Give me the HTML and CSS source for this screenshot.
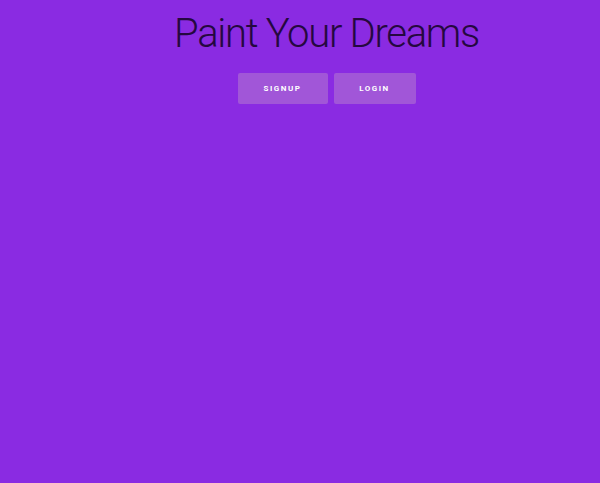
FILE: index.html
```html
<!DOCTYPE html>
<html>
<head>
<meta charset="utf-8">
<link rel="stylesheet" href="styles.css">
</head>
<body>
<div class="hero">
  <h1 class="title">Paint Your Dreams</h1>
  <div class="actions">
    <button class="btn btn-signup">SIGNUP</button>
    <button class="btn btn-login">LOGIN</button>
  </div>
</div>
</body>
</html>
```
FILE: styles.css
```css
html, body {
  margin: 0;
  height: 100%;
}
body {
  background: #8a2be2;
  font-family: Roboto, "Noto Sans", sans-serif;
}
.hero {
  display: flex;
  flex-direction: column;
  align-items: center;
  padding-left: 53px;
  padding-top: 11px;
}
.title {
  margin: 0;
  font-weight: 300;
  font-size: 40px;
  line-height: 46px;
  color: #250840;
  letter-spacing: -1.3px;
}
.actions {
  display: flex;
  gap: 6px;
  margin-top: 16px;
}
.btn {
  border: none;
  border-radius: 2px;
  background: #a156d8;
  color: #fff;
  font-family: Roboto, sans-serif;
  font-weight: 700;
  font-size: 8px;
  letter-spacing: 1.5px;
  height: 31px;
  padding: 0;
}
.btn-signup { width: 90px; }
.btn-login { width: 82px; }
```
